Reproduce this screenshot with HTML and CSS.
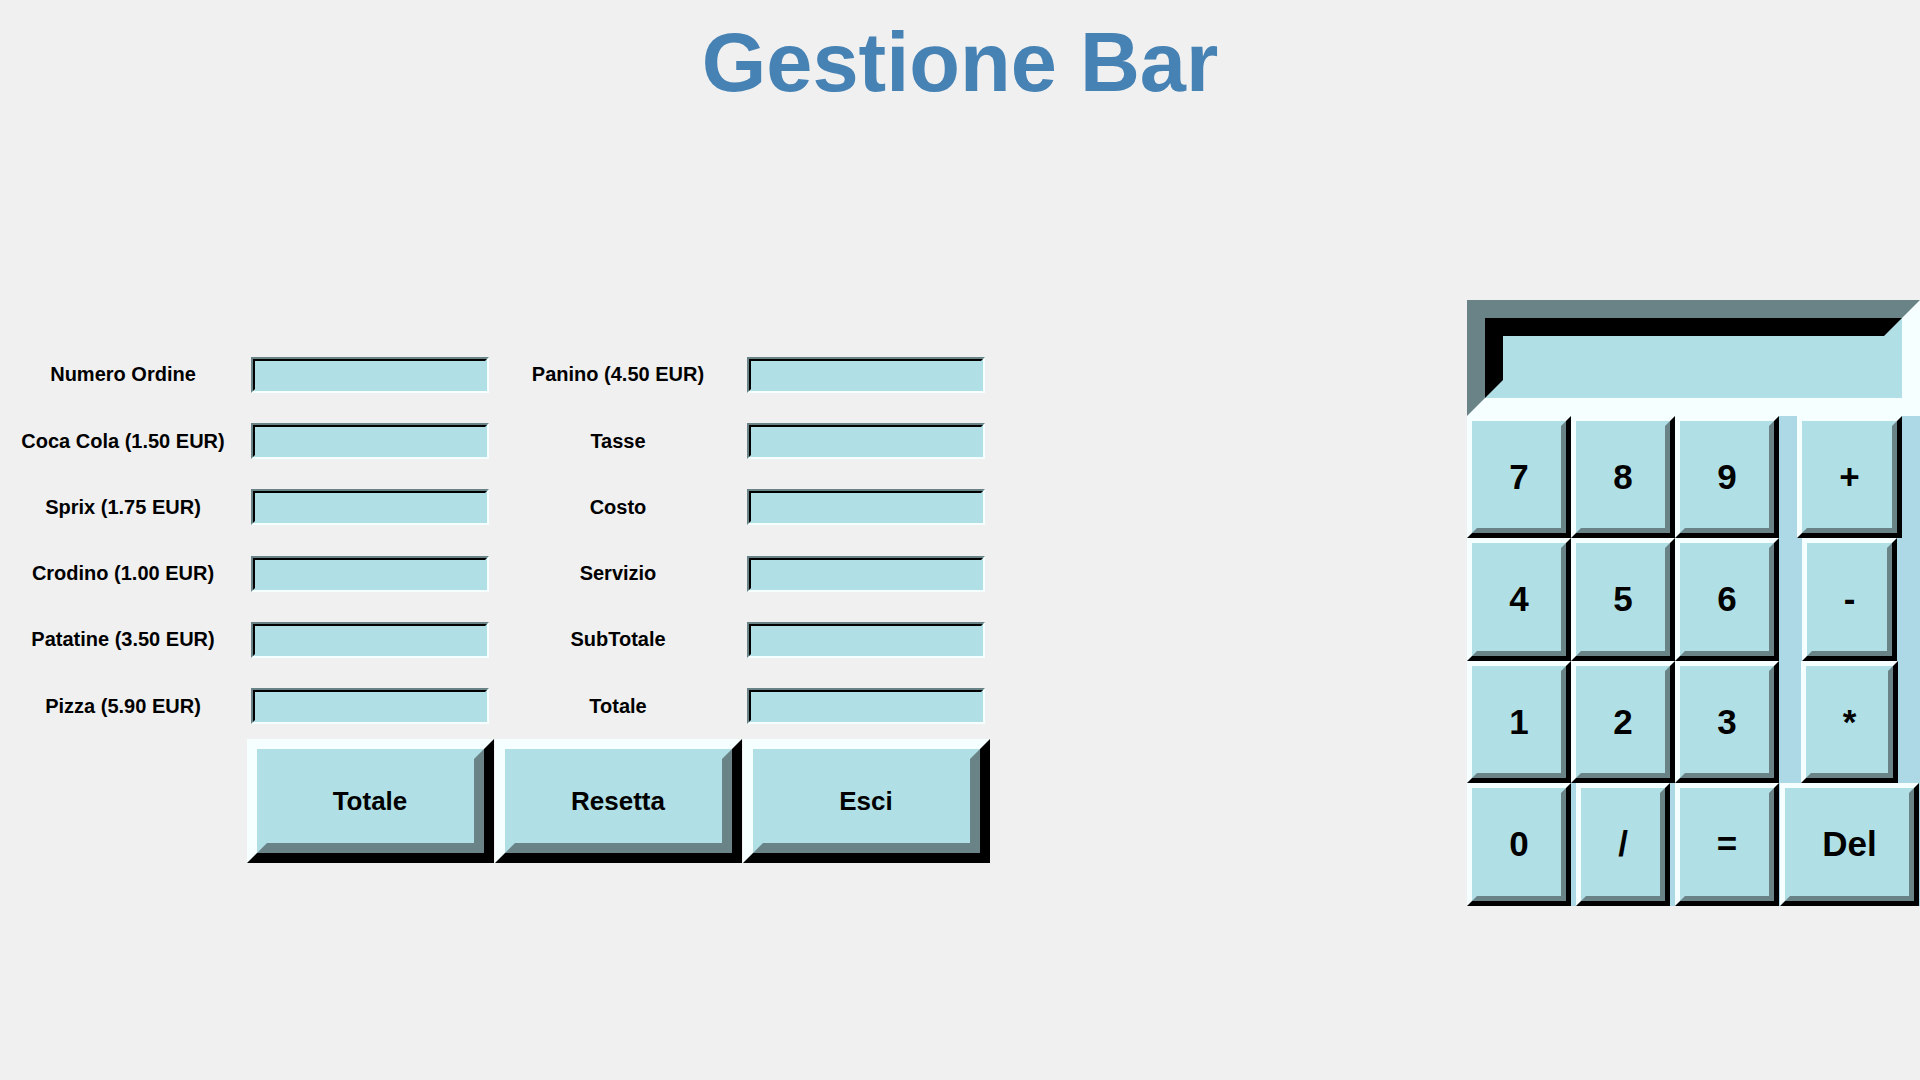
FILE: index.html
```html
<!DOCTYPE html>
<html lang="it">
<head>
  <meta charset="UTF-8" />
  <meta name="viewport" content="width=device-width, initial-scale=1.0"/>
  <title>Gestione Bar</title>
  <link rel="stylesheet" href="styles.css">
</head>
<body>
  <h1 class="titolo">Gestione Bar</h1>

  <div class="principale">
    <div class="ordine">
      <label>Numero Ordine</label>
      <span class="campo"><input type="text" id="numOrdine"></span>
      <label>Panino (4.50 EUR)</label>
      <span class="campo"><input type="text" id="panino"></span>

      <label>Coca Cola (1.50 EUR)</label>
      <span class="campo"><input type="text" id="coca"></span>
      <label>Tasse</label>
      <span class="campo"><input type="text" id="tasse"></span>

      <label>Sprix (1.75 EUR)</label>
      <span class="campo"><input type="text" id="sprix"></span>
      <label>Costo</label>
      <span class="campo"><input type="text" id="costo"></span>

      <label>Crodino (1.00 EUR)</label>
      <span class="campo"><input type="text" id="crodino"></span>
      <label>Servizio</label>
      <span class="campo"><input type="text" id="servizio"></span>

      <label>Patatine (3.50 EUR)</label>
      <span class="campo"><input type="text" id="patatine"></span>
      <label>SubTotale</label>
      <span class="campo"><input type="text" id="subtotale"></span>

      <label>Pizza (5.90 EUR)</label>
      <span class="campo"><input type="text" id="pizza"></span>
      <label>Totale</label>
      <span class="campo"><input type="text" id="totale"></span>

      <div></div>
      <button class="btn" onclick="calcolaTotale()"><span>Totale</span></button>
      <button class="btn" onclick="resetta()"><span>Resetta</span></button>
      <button class="btn" onclick="window.close()"><span>Esci</span></button>
    </div>

    <div class="calcolatrice">
      <div class="display"><input type="text" id="display"></div>
      <button class="tasto" onclick="premi('7')"><span>7</span></button>
      <button class="tasto" onclick="premi('8')"><span>8</span></button>
      <button class="tasto" onclick="premi('9')"><span>9</span></button>
      <button class="tasto" onclick="premi('+')"><span>+</span></button>
      <button class="tasto" onclick="premi('4')"><span>4</span></button>
      <button class="tasto" onclick="premi('5')"><span>5</span></button>
      <button class="tasto" onclick="premi('6')"><span>6</span></button>
      <button class="tasto" onclick="premi('-')"><span>-</span></button>
      <button class="tasto" onclick="premi('1')"><span>1</span></button>
      <button class="tasto" onclick="premi('2')"><span>2</span></button>
      <button class="tasto" onclick="premi('3')"><span>3</span></button>
      <button class="tasto" onclick="premi('*')"><span>*</span></button>
      <button class="tasto" onclick="premi('0')"><span>0</span></button>
      <button class="tasto" onclick="premi('/')"><span>/</span></button>
      <button class="tasto" onclick="uguale()"><span>=</span></button>
      <button class="tasto" onclick="cancella()"><span>Del</span></button>
    </div>
  </div>

  <script>
    const prezzi = { coca: 1.50, sprix: 1.75, crodino: 1.00, patatine: 3.50, pizza: 5.90, panino: 4.50 };

    function valore(id) {
      return parseFloat(document.getElementById(id).value) || 0;
    }

    function calcolaTotale() {
      let costo = 0;
      for (const id in prezzi) costo += valore(id) * prezzi[id];
      const tasse = costo * 0.1;
      const servizio = costo / 99;
      const sub = costo + servizio;
      document.getElementById("costo").value = costo.toFixed(2) + " EUR";
      document.getElementById("tasse").value = tasse.toFixed(2) + " EUR";
      document.getElementById("servizio").value = servizio.toFixed(2) + " EUR";
      document.getElementById("subtotale").value = sub.toFixed(2) + " EUR";
      document.getElementById("totale").value = (sub + tasse).toFixed(2) + " EUR";
    }

    function resetta() {
      document.querySelectorAll(".campo input").forEach(i => i.value = "");
    }

    function premi(c) {
      document.getElementById("display").value += c;
    }

    function uguale() {
      const d = document.getElementById("display");
      try { d.value = Function("return " + d.value)(); } catch (e) { d.value = "Errore"; }
    }

    function cancella() {
      document.getElementById("display").value = "";
    }
  </script>
</body>
</html>
```

FILE: styles.css
```css
body {
  font-family: "Liberation Sans", Arial, sans-serif;
  background-color: #f0f0f0;
  margin: 0;
  height: 1080px;
  display: flex;
  flex-direction: column;
  overflow: hidden;
}
.titolo {
  margin: 0;
  height: 125px;
  display: flex;
  align-items: center;
  justify-content: center;
  font-size: 83px;
  font-weight: bold;
  color: #4682b4;
}
.principale {
  flex: 1;
  display: flex;
  justify-content: space-between;
  align-items: center;
}

/* ordine */
.ordine {
  display: grid;
  grid-template-columns: 246px 248px 248px 248px;
  grid-template-rows: repeat(6, 66.33px) 124px;
  align-items: center;
  justify-items: center;
}
.ordine label {
  font-size: 20px;
  font-weight: bold;
  color: #000;
}
.campo {
  display: block;
  width: 238px;
  height: 36px;
  box-sizing: border-box;
  border: 2px solid;
  border-color: #6a8387 #f5ffff #f5ffff #6a8387;
}
.campo input {
  display: block;
  box-sizing: border-box;
  width: 100%;
  height: 100%;
  margin: 0;
  padding: 0 3px;
  border: 2px solid;
  border-color: #000 #b0e0e6 #b0e0e6 #000;
  background-color: #b0e0e6;
  font: 18px "Liberation Sans", Arial, sans-serif;
  outline: none;
}
.btn {
  width: 247px;
  height: 124px;
  padding: 0;
  border: 10px solid;
  border-color: #f5ffff #000 #000 #f5ffff;
  background-color: #b0e0e6;
  font: bold 26px "Liberation Sans", Arial, sans-serif;
  color: #000;
  cursor: pointer;
}
.btn span {
  display: flex;
  align-items: center;
  justify-content: center;
  height: 100%;
  box-sizing: border-box;
  border: 10px solid;
  border-color: #b0e0e6 #6a8387 #6a8387 #b0e0e6;
}

/* calcolatrice */
.calcolatrice {
  width: 453px;
  background-color: #add8e6;
  display: grid;
  grid-template-columns: 104px 104px 104px 1fr;
  grid-template-rows: 116px repeat(4, 122.5px);
  justify-items: center;
}
.display {
  grid-column: 1 / -1;
  justify-self: stretch;
  box-sizing: border-box;
  border: 18px solid;
  border-color: #6a8387 #f5ffff #f5ffff #6a8387;
}
.display input {
  display: block;
  box-sizing: border-box;
  width: 100%;
  height: 100%;
  margin: 0;
  padding: 0 4px;
  border: 18px solid;
  border-color: #000 #b0e0e6 #b0e0e6 #000;
  background-color: #b0e0e6;
  font: bold 30px "Liberation Sans", Arial, sans-serif;
  outline: none;
}
.tasto {
  height: 122.5px;
  padding: 0;
  border: 5px solid;
  border-color: #f5ffff #000 #000 #f5ffff;
  background-color: #b0e0e6;
  font: bold 35px "Liberation Sans", Arial, sans-serif;
  color: #000;
  cursor: pointer;
}
.tasto span {
  display: flex;
  align-items: center;
  justify-content: center;
  height: 100%;
  box-sizing: border-box;
  padding: 0 32px;
  border: 5px solid;
  border-color: #b0e0e6 #6a8387 #6a8387 #b0e0e6;
}
```
